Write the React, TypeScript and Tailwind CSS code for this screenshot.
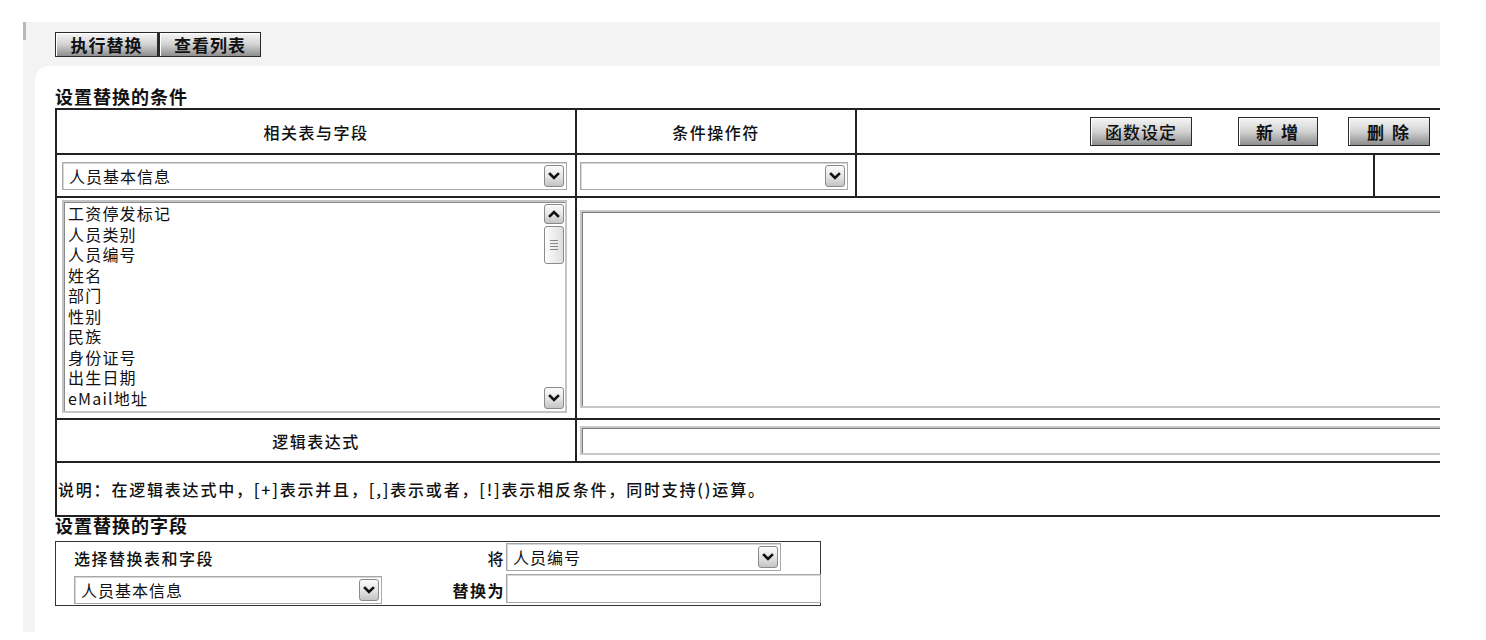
const font = { fontFamily: '"Noto Sans CJK SC", "Liberation Sans", sans-serif' };

function Chevron({ up = false }: { up?: boolean }) {
  return (
    <svg width="12" height="10" viewBox="0 0 12 10" className={up ? 'rotate-180' : ''}>
      <path d="M2 3 L6 7 L10 3" fill="none" stroke="#111" strokeWidth="2.6" strokeLinecap="square" />
    </svg>
  );
}

function ArrowBtn({ up = false, h = 'h-[22px]' }: { up?: boolean; h?: string }) {
  return (
    <div className={`w-[20px] ${h} shrink-0 flex items-center justify-center rounded-[3px] border border-[#8a8a8a] bg-linear-to-b from-[#fbfbfb] via-[#e6e6e6] to-[#c4c4c4]`}>
      <Chevron up={up} />
    </div>
  );
}

function Select({ value = '', className = '' }: { value?: string; className?: string }) {
  return (
    <div className={`h-[28px] flex items-center border border-[#a8a8a8] shadow-[inset_1px_1px_0_#d6d6d6] bg-white pr-[2px] ${className}`}>
      <span className="flex-1 pl-[6px] text-[16px] leading-[20px] tracking-[1px] text-[#111] whitespace-nowrap">{value}</span>
      <ArrowBtn />
    </div>
  );
}

function ToolButton({ label, className = '' }: { label: string; className?: string }) {
  return (
    <button className={`h-[25px] flex items-center justify-center border border-[#2a2a2a] shadow-[inset_1px_1px_0_#fff] bg-linear-to-b from-[#f6f6f6] via-[#d2d2d2] to-[#8e8e8e] font-bold text-[17px] leading-[20px] text-[#111] ${className}`}>
      {label}
    </button>
  );
}

const fields = ['工资停发标记', '人员类别', '人员编号', '姓名', '部门', '性别', '民族', '身份证号', '出生日期', 'eMail地址'];

export default function App() {
  return (
    <div className="w-[1486px] h-[640px] bg-white overflow-hidden text-[#111]" style={font}>
      <div className="pt-[22px] pl-[23px] w-[1440px]">
        <div className="h-[610px] bg-[#f3f3f3] flex flex-col">
          {/* toolbar */}
          <div className="h-[44px] flex items-start">
            <div className="w-[3px] h-[18px] bg-[#b8b8b8]" />
            <div className="flex mt-[10px] ml-[29px]">
              <ToolButton label="执行替换" className="w-[103px] tracking-[1px]" />
              <ToolButton label="查看列表" className="w-[103px] tracking-[1px] border-l-2" />
            </div>
          </div>

          {/* panel */}
          <div className="flex-1 ml-[12px] bg-white rounded-tl-[14px] pl-[20px] pt-[21px]">
            <div className="h-[21px] font-bold text-[18px] leading-[18px] tracking-[1px]">设置替换的条件</div>

            <div className="w-[1385px] overflow-hidden">
              <div className="grid grid-cols-[520px_280px_518px_120px] w-[1438px] border-t-2 border-l-2 border-[#222]">
                {/* row 1 */}
                <div className="h-[45px] border-b-2 border-r-2 border-[#222] flex items-center justify-center text-[16px] font-medium tracking-[1.5px]">相关表与字段</div>
                <div className="h-[45px] border-b-2 border-r-2 border-[#222] flex items-center justify-center text-[16px] font-medium tracking-[1.5px]">条件操作符</div>
                <div className="col-span-2 h-[45px] border-b-2 border-[#222] flex items-center pl-[233px]">
                  <ToolButton label="函数设定" className="w-[102px] h-[29px] font-medium tracking-[1px]" />
                  <ToolButton label="新 增" className="w-[80px] h-[29px] ml-[46px] tracking-[2px]" />
                  <ToolButton label="删 除" className="w-[82px] h-[29px] ml-[30px] tracking-[2px]" />
                </div>

                {/* row 2 */}
                <div className="h-[43px] border-b-2 border-r-2 border-[#222] flex items-center pl-[5px] pr-[8px]">
                  <Select value="人员基本信息" className="w-full" />
                </div>
                <div className="h-[43px] border-b-2 border-r-2 border-[#222] flex items-center pl-[3px] pr-[7px]">
                  <Select className="w-full" />
                </div>
                <div className="h-[43px] border-b-2 border-r-2 border-[#222]" />
                <div className="h-[43px] border-b-2 border-[#222]" />

                {/* row 3 */}
                <div className="h-[222px] border-b-2 border-r-2 border-[#222] pl-[5px] pr-[8px] pt-[2px]">
                  <div className="h-[213px] flex border-2 border-[#c4c4c4] shadow-[inset_1px_1px_0_#8a8a8a] bg-white pr-[1px]">
                    <div className="flex-1 pl-[4px] pt-[1px]">
                      {fields.map((f) => (
                        <div key={f} className="h-[20.5px] text-[16px] leading-[20.5px] tracking-[1.2px] whitespace-nowrap">{f}</div>
                      ))}
                    </div>
                    <div className="w-[20px] flex flex-col py-[2px]">
                      <ArrowBtn up h="h-[20px]" />
                      <div className="mt-[2px] h-[38px] rounded-[3px] border border-[#8a8a8a] bg-linear-to-r from-[#fdfdfd] to-[#dedede] flex flex-col items-center justify-center gap-[2px]">
                        <div className="w-[8px] h-px bg-[#888]" />
                        <div className="w-[8px] h-px bg-[#888]" />
                        <div className="w-[8px] h-px bg-[#888]" />
                        <div className="w-[8px] h-px bg-[#888]" />
                      </div>
                      <div className="flex-1" />
                      <ArrowBtn h="h-[22px]" />
                    </div>
                  </div>
                </div>
                <div className="col-span-3 h-[222px] border-b-2 border-[#222] pl-[3px] pt-[12px]">
                  <div className="w-[900px] h-[198px] border-2 border-[#c8c8c8] shadow-[inset_1px_1px_0_#7a7a7a] bg-white" />
                </div>

                {/* row 4 */}
                <div className="h-[43px] border-b-2 border-r-2 border-[#222] flex items-center justify-center text-[16px] font-medium tracking-[1.5px]">逻辑表达式</div>
                <div className="col-span-3 h-[43px] border-b-2 border-[#222] flex items-center pl-[3px]">
                  <div className="w-[900px] h-[29px] border-2 border-[#c8c8c8] shadow-[inset_1px_1px_0_#7a7a7a] bg-white" />
                </div>

                {/* row 5 */}
                <div className="col-span-4 h-[54px] border-b-2 border-[#222] flex items-center pl-[1px] text-[16px] font-medium tracking-[1.8px] whitespace-nowrap">
                  说明：在逻辑表达式中，[+]表示并且，[,]表示或者，[!]表示相反条件，同时支持()运算。
                </div>
              </div>
            </div>

            <div className="h-[24px] font-bold text-[18px] leading-[17px] tracking-[1px]">设置替换的字段</div>

            <div className="w-[766px] h-[65px] border border-[#333] p-px grid grid-cols-[449px_315px] grid-rows-[29px_31px] gap-y-[2px]">
              <div className="flex items-center justify-between pl-[17px] pr-[1px] text-[16px] font-medium tracking-[1.5px]">
                <span>选择替换表和字段</span>
                <span>将</span>
              </div>
              <div className="pr-[40px]">
                <Select value="人员编号" className="w-full" />
              </div>
              <div className="flex items-center justify-between pl-[17px] pr-[1px] text-[16px] tracking-[1.5px]">
                <Select value="人员基本信息" className="w-[308px]" />
                <span className="font-bold">替换为</span>
              </div>
              <div className="h-[29px] border border-[#a8a8a8] shadow-[inset_1px_1px_0_#d6d6d6] bg-white" />
            </div>
          </div>
        </div>
      </div>
    </div>
  );
}
